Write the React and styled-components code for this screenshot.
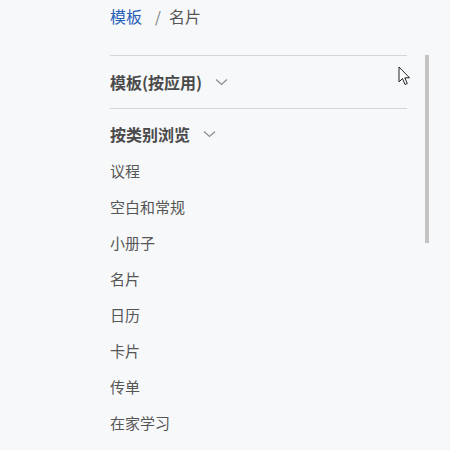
import React from "react";
import styled, { createGlobalStyle } from "styled-components";

const Global = createGlobalStyle`
  html, body { margin: 0; padding: 0; background: #f7f8fa; }
  body { font-family: "Noto Sans CJK SC", "Noto Sans", sans-serif; }
`;

const Page = styled.div`
  position: relative;
  width: 450px;
  height: 450px;
  overflow: hidden;
  background: #f7f8fa;
`;

const Panel = styled.div`
  margin-left: 110px;
  width: 297px;
  display: flex;
  flex-direction: column;
`;

const Breadcrumb = styled.nav`
  display: flex;
  align-items: center;
  height: 32px;
  font-size: 16px;
  color: #555;
  margin-bottom: 23px;
`;

const Crumb = styled.a`
  color: ${(p) => (p.$link ? "#2a5fb8" : "#555")};
  text-decoration: none;
`;

const Sep = styled.span`
  margin: 0 8px 0 13px;
  color: #777;
  font-size: 15px;
`;

const Divider = styled.div`
  height: 1px;
  background: #d6d6d8;
`;

const SectionHead = styled.div`
  display: flex;
  align-items: center;
  height: ${(p) => p.$h}px;
  padding-top: ${(p) => p.$pt || 0}px;
  font-size: 16px;
  font-weight: 700;
  color: #4a4a4a;
`;

const Chevron = styled.svg`
  margin-left: 13px;
  width: 13px;
  height: 8px;
`;

const List = styled.ul`
  list-style: none;
  margin: 0;
  padding: 0;
`;

const Item = styled.li`
  height: 36px;
  line-height: 36px;
  font-size: 15px;
  color: #555;
`;

const Thumb = styled.div`
  position: absolute;
  left: 425px;
  top: 55px;
  width: 4px;
  height: 188px;
  background: #c3c3c4;
`;

const Cursor = styled.svg`
  position: absolute;
  left: 398px;
  top: 66px;
`;

const Chev = () => (
  <Chevron viewBox="0 0 13 8">
    <path d="M1 1.5 L6.5 6.5 L12 1.5" fill="none" stroke="#8a8a8a" strokeWidth="1.2" />
  </Chevron>
);

const items = ["议程", "空白和常规", "小册子", "名片", "日历", "卡片", "传单", "在家学习"];

export default function App() {
  return (
    <Page>
      <Global />
      <Panel>
        <Breadcrumb>
          <Crumb $link href="#">模板</Crumb>
          <Sep>/</Sep>
          <Crumb>名片</Crumb>
        </Breadcrumb>
        <Divider />
        <SectionHead $h={52}>
          模板(按应用)
          <Chev />
        </SectionHead>
        <Divider />
        <SectionHead $h={38} $pt={6}>
          按类别浏览
          <Chev />
        </SectionHead>
        <List>
          {items.map((t) => (
            <Item key={t}>{t}</Item>
          ))}
        </List>
      </Panel>
      <Thumb />
      <Cursor width="14" height="21" viewBox="0 0 14 21">
        <path
          d="M1 1 L1 16 L4.5 12.5 L7 18.5 L9.3 17.5 L6.8 11.8 L11.5 11.8 Z"
          fill="#fff"
          stroke="#222"
          strokeWidth="1"
          strokeLinejoin="miter"
        />
      </Cursor>
    </Page>
  );
}
